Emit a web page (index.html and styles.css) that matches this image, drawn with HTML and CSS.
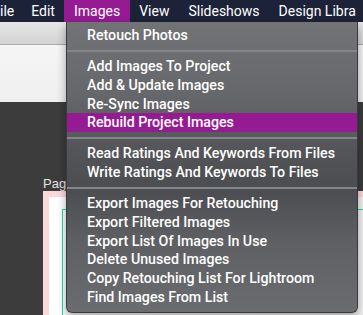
FILE: index.html
```html
<!DOCTYPE html>
<html lang="en">
<head>
    <meta charset="UTF-8">
    <title>Images Menu</title>
    <link rel="stylesheet" href="styles.css">
</head>
<body>
    <nav class="menubar">
        <span class="menubar-item first">ile</span>
        <span class="menubar-item">Edit</span>
        <span class="menubar-item active">Images</span>
        <span class="menubar-item">View</span>
        <span class="menubar-item">Slideshows</span>
        <span class="menubar-item">Design Libra</span>
    </nav>

    <div class="window">
        <div class="toolbar"></div>
        <div class="header-area"></div>
        <div class="workspace">
            <div class="page-label">Pag</div>
            <div class="page">
                <div class="page-inner">
                    <div class="frame"></div>
                </div>
            </div>
        </div>
    </div>

    <!-- dropdown for the Images menu -->
    <div class="dropdown">
        <div class="menu-item">Retouch Photos</div>
        <div class="separator"></div>
        <div class="menu-item">Add Images To Project</div>
        <div class="menu-item">Add &amp; Update Images</div>
        <div class="menu-item">Re-Sync Images</div>
        <div class="menu-item selected">Rebuild Project Images</div>
        <div class="separator"></div>
        <div class="menu-item">Read Ratings And Keywords From Files</div>
        <div class="menu-item">Write Ratings And Keywords To Files</div>
        <div class="separator"></div>
        <div class="menu-item">Export Images For Retouching</div>
        <div class="menu-item">Export Filtered Images</div>
        <div class="menu-item">Export List Of Images In Use</div>
        <div class="menu-item">Delete Unused Images</div>
        <div class="menu-item">Copy Retouching List For Lightroom</div>
        <div class="menu-item">Find Images From List</div>
    </div>
</body>
</html>
```

FILE: styles.css
```css
:root {
    --bar: #1c2237;
    --purple: #951b93;
    --text: #ffffff;
}

* {
    margin: 0;
    padding: 0;
    box-sizing: border-box;
}

body {
    width: 363px;
    height: 315px;
    overflow: hidden;
    font-family: 'Roboto', 'Noto Sans', sans-serif;
    background: #3c3c3c;
    position: relative;
}

.menubar {
    height: 22px;
    background: var(--bar);
    display: flex;
    align-items: stretch;
    white-space: nowrap;
    overflow: hidden;
}

.menubar-item {
    color: var(--text);
    font-size: 14px;
    line-height: 22px;
    padding: 0 9.5px;
}

.menubar-item.first {
    padding-left: 0;
    padding-right: 7.5px;
}

.menubar-item.active {
    background: var(--purple);
}

.window {
    display: flex;
    flex-direction: column;
    height: 293px;
    overflow: hidden;
}

.toolbar {
    flex-shrink: 0;
    height: 23px;
    background: linear-gradient(to bottom, #e6e6e6, #d3d3d3);
    border-bottom: 1px solid #a9a9a9;
}

.header-area {
    flex-shrink: 0;
    height: 57px;
    background: linear-gradient(to bottom, #f5f5f5, #efefef);
}

.workspace {
    flex: 1;
    min-height: 0;
    overflow: hidden;
    background: #3c3c3c;
    padding: 74px 0 0 43px;
}

.page-label {
    color: #e4e4e4;
    font-family: 'Liberation Sans', sans-serif;
    font-size: 13px;
    line-height: 15px;
}

.page {
    height: 140px;
    background: #fbd9d9;
    padding: 6px 0 0 6px;
}

.page-inner {
    height: 100%;
    background: linear-gradient(to right, #ffffff, #f1f1f1);
    padding: 12px 0 0 13px;
}

.frame {
    height: 100%;
    border-top: 1px solid #22d7a6;
    border-left: 1px solid #22d7a6;
}

.dropdown {
    position: absolute;
    left: 66px;
    top: 22px;
    width: 292px;
    height: 291px;
    padding: 4px 0;
    background: linear-gradient(to bottom, #727376 0%, #66676a 25%, #535457 45%, #4c4d50 58%, #5e5f62 75%, #6b6c6f 100%);
    border: 1px solid #3a3a3c;
    border-top: none;
    border-radius: 0 0 6px 6px;
    box-shadow: 0 4px 10px rgba(0, 0, 0, 0.35);
}

.menu-item {
    height: 18.7px;
    line-height: 18.7px;
    padding-left: 20px;
    color: var(--text);
    font-size: 14.2px;
    font-weight: 500;
    white-space: nowrap;
}

.menu-item.selected {
    background: var(--purple);
}

.separator {
    height: 12.5px;
    display: flex;
    align-items: center;
}

.separator::after {
    content: '';
    display: block;
    width: 100%;
    height: 2px;
    background: #858689;
}
```
